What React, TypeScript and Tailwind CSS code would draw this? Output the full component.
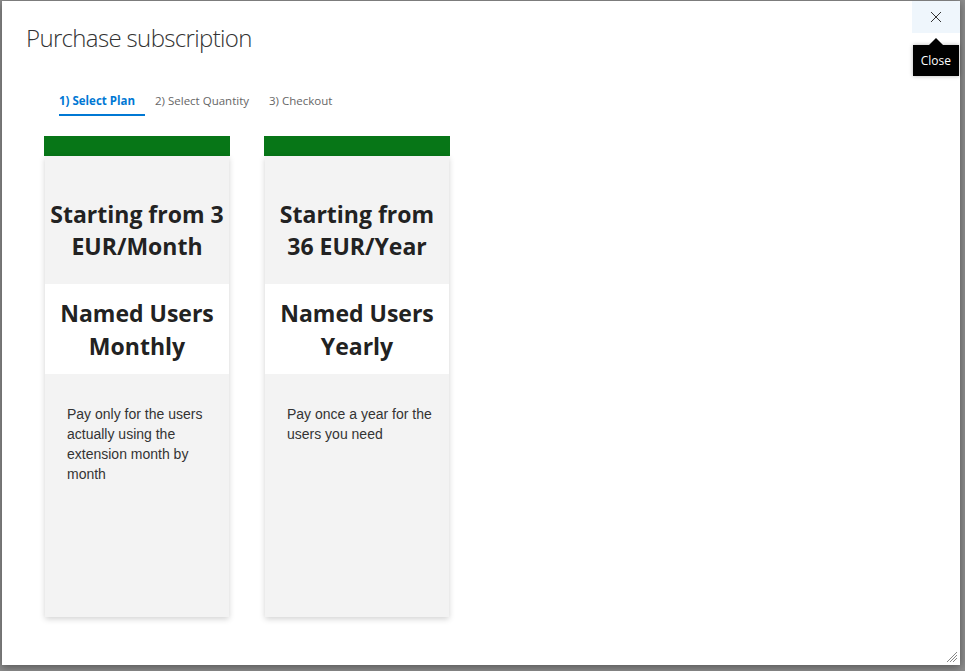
import React from 'react';

interface Plan {
  price: string[];
  name: string[];
  description: string;
}

const plans: Plan[] = [
  {
    price: ['Starting from 3', 'EUR/Month'],
    name: ['Named Users', 'Monthly'],
    description: 'Pay only for the users actually using the extension month by month',
  },
  {
    price: ['Starting from', '36 EUR/Year'],
    name: ['Named Users', 'Yearly'],
    description: 'Pay once a year for the users you need',
  },
];

const tabs = ['1) Select Plan', '2) Select Quantity', '3) Checkout'];

function PlanCard({ plan }: { plan: Plan }) {
  return (
    <div className="w-[186px] flex flex-col">
      <div className="h-[20px] bg-[#077617]" />
      <div className="mx-px h-[461px] bg-[#f3f3f3] shadow-[0_2px_6px_rgba(0,0,0,0.18)] flex flex-col">
        <div className="h-[128px] flex items-center justify-center text-center font-['Open_Sans',sans-serif] font-bold text-[23px] leading-[32px] text-[#222] pt-[20px]">
          <div>
            {plan.price.map((l, i) => (
              <div key={i}>{l}</div>
            ))}
          </div>
        </div>
        <div className="h-[90px] bg-white flex items-center justify-center text-center font-['Open_Sans',sans-serif] font-bold text-[23px] leading-[33px] text-[#222] pt-[2px]">
          <div>
            {plan.name.map((l, i) => (
              <div key={i}>{l}</div>
            ))}
          </div>
        </div>
        <p className="pl-[22px] pr-[12px] pt-[30px] font-['Liberation_Sans',Arial,sans-serif] text-[14px] leading-[20px] text-[#333]">
          {plan.description}
        </p>
      </div>
    </div>
  );
}

export default function App() {
  return (
    <div className="w-[965px] h-[671px] bg-[#8c8c8c] pl-[2px] pt-[1px] pr-[5px] pb-[6px] overflow-hidden">
      <div className="relative h-full bg-white shadow-[0_2px_8px_rgba(0,0,0,0.4)]">
        {/* Header */}
        <h1 className="pl-[24px] pt-[20px] font-['Open_Sans',sans-serif] font-light text-[24px] leading-[34px] tracking-[-0.65px] text-[#333]">
          Purchase subscription
        </h1>

        {/* Steps */}
        <div className="flex gap-[10px] pl-[57px] mt-[37px]">
          {tabs.map((t, i) => (
            <div
              key={t}
              className={`font-['Open_Sans',sans-serif] text-[11.5px] pr-[10px] pb-[5px] border-b-2 ${
                i === 0 ? 'font-bold text-[#0078d4] border-[#0078d4]' : 'text-[#666] border-transparent'
              }`}
            >
              {t}
            </div>
          ))}
        </div>

        {/* Plans */}
        <div className="flex gap-[34px] pl-[42px] mt-[20px]">
          {plans.map((p, i) => (
            <PlanCard key={i} plan={p} />
          ))}
        </div>

        {/* Close button */}
        <button className="absolute top-0 right-0 w-[48px] h-[32px] bg-[#eff6fc] flex items-center justify-center">
          <svg width="12" height="12" viewBox="0 0 12 12" fill="none" stroke="#333" strokeWidth="1">
            <path d="M1 1L11 11M11 1L1 11" />
          </svg>
        </button>
        <div className="absolute top-[44px] right-px flex flex-col items-center">
          <div className="absolute -top-[7px] w-0 h-0 border-l-[8px] border-r-[8px] border-b-[8px] border-l-transparent border-r-transparent border-b-black" />
          <div className="bg-black text-white font-['Open_Sans',sans-serif] text-[12px] leading-[31px] px-[8px] shadow-[0_0_4px_rgba(0,0,0,0.3)]">
            Close
          </div>
        </div>

        {/* Resize grip */}
        <svg className="absolute right-[3px] bottom-[3px]" width="10" height="10" viewBox="0 0 10 10" stroke="#888" strokeWidth="1">
          <path d="M10 0L0 10M10 3L3 10M10 6L6 10" />
        </svg>
      </div>
    </div>
  );
}
